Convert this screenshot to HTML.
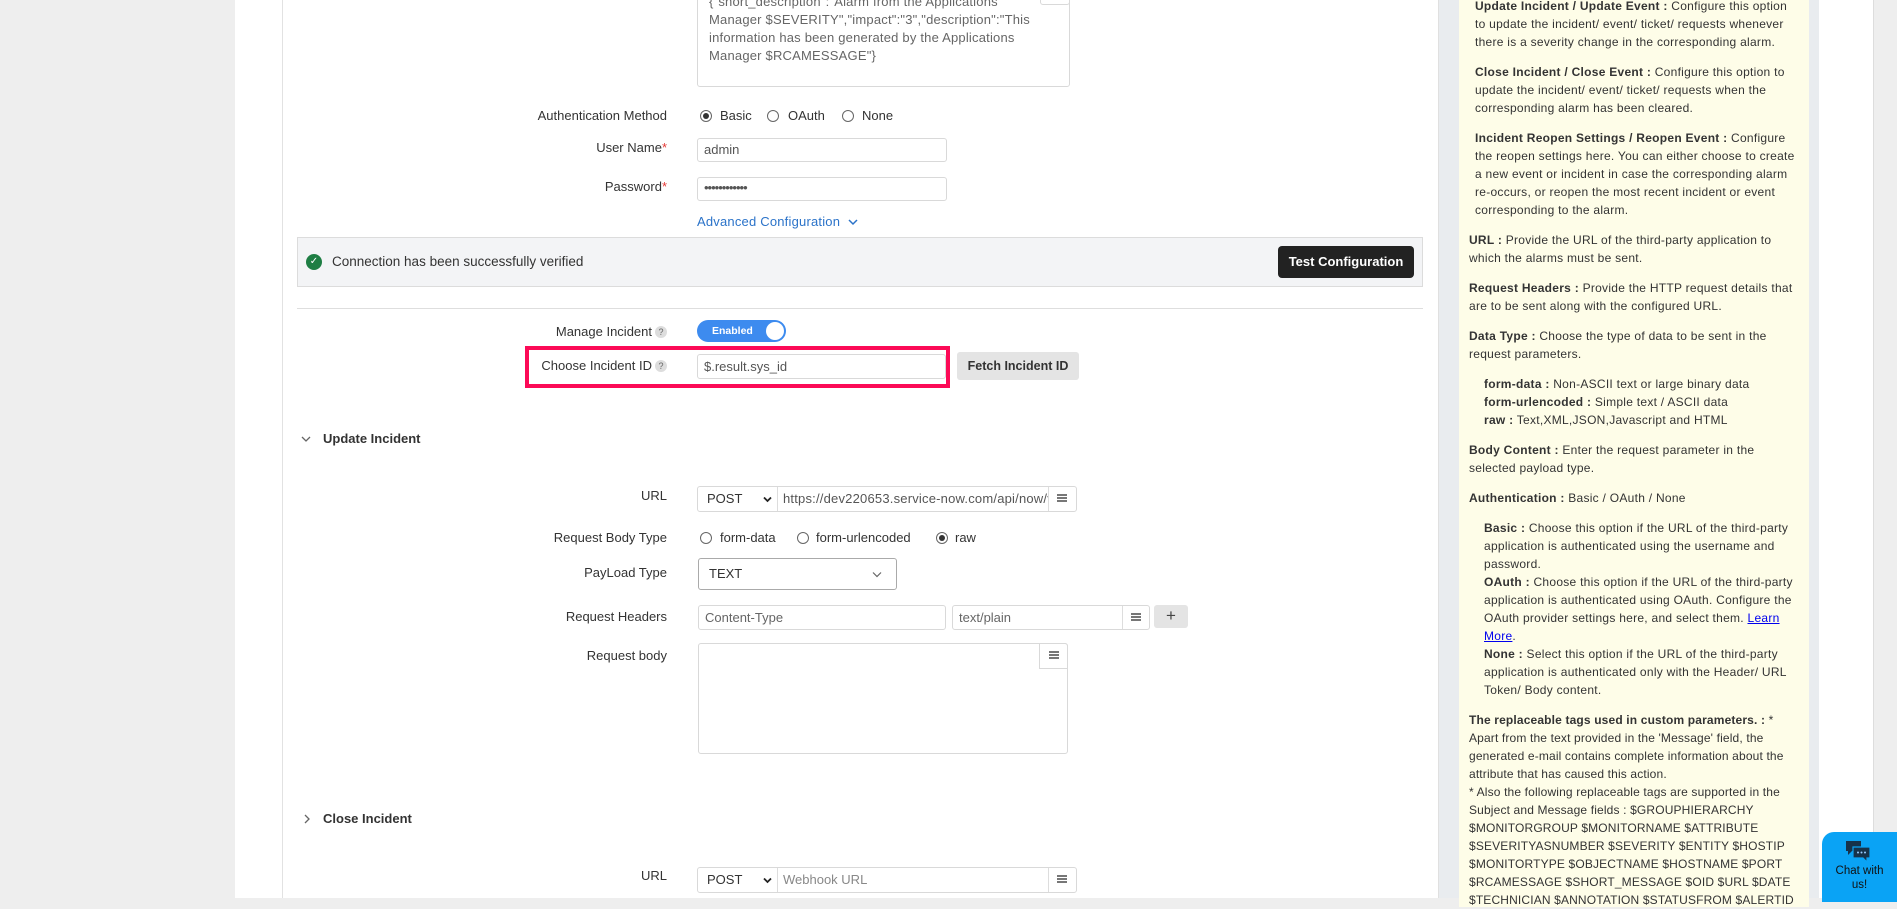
<!DOCTYPE html>
<html><head><meta charset="utf-8"><style>
*{box-sizing:border-box;margin:0;padding:0}
body{width:1897px;height:898px;overflow:hidden;background:#eeeeee;font-family:"Liberation Sans",sans-serif;font-size:13px;color:#333;position:relative}
.a{position:absolute}
.lbl{position:absolute;right:1230px;text-align:right;white-space:nowrap;color:#333;font-size:13px}
.inp{position:absolute;border:1px solid #d9d9d9;border-radius:3px;background:#fff;color:#555;padding-left:6px;font-size:13px;white-space:nowrap;overflow:hidden}
.rad{position:absolute;width:12px;height:12px;border:1px solid #666;border-radius:50%;background:#fff}
.rad.on::after{content:"";position:absolute;left:2px;top:2px;width:6px;height:6px;border-radius:50%;background:#333}
.t{position:absolute;white-space:nowrap;font-size:13px;color:#333}
.q{display:inline-block;width:12px;height:12px;border-radius:50%;background:#ddd;color:#666;font-size:9px;text-align:center;line-height:12px;vertical-align:1px;margin-left:3px}
.ico{position:absolute;width:10px;height:8px;border-top:2px solid #777;border-bottom:2px solid #777}
.ico::after{content:"";position:absolute;left:0;top:1px;width:10px;height:2px;background:#777}
.rp{position:absolute;left:1459px;top:-3px;width:350px;height:910px;background:#fefde8;padding:0 10px 0 10px;font-size:12px;letter-spacing:0.27px;line-height:18px;color:#333}
.rp p{margin-bottom:12px}
.rp b{color:#333}
.nw{white-space:nowrap}
</style></head><body>
<div class="a" style="left:235px;top:0;width:1203px;height:898px;background:#fff"></div>
<div class="a" style="left:282px;top:0;width:1px;height:898px;background:#e2e2e2"></div>
<div class="a" style="left:1438px;top:0;width:21px;height:898px;background:#e9ecef;border-left:1px solid #e0e0e0"></div>
<div class="a" style="left:1809px;top:0;width:10px;height:898px;background:#e9ecef"></div>
<div class="a" style="left:1819px;top:0;width:55px;height:898px;background:#fff;border-right:1px solid #ddd"></div>

<div class="a" style="left:697px;top:-10px;width:373px;height:97px;border:1px solid #d9d9d9;border-radius:3px"></div>
<div class="a" style="left:1040px;top:-5px;width:30px;height:10px;border:1px solid #d9d9d9;border-radius:3px"></div>
<div class="t" style="left:709px;top:-7px;color:#666;line-height:18px;letter-spacing:0.2px">{"short_description":"Alarm from the Applications<br>Manager $SEVERITY","impact":"3","description":"This<br>information has been generated by the Applications<br>Manager $RCAMESSAGE"}</div>

<div class="lbl" style="top:108px">Authentication Method</div>
<div class="rad on" style="left:700px;top:110px"></div><div class="t" style="left:720px;top:108px">Basic</div>
<div class="rad" style="left:767px;top:110px"></div><div class="t" style="left:788px;top:108px">OAuth</div>
<div class="rad" style="left:842px;top:110px"></div><div class="t" style="left:862px;top:108px">None</div>

<div class="lbl" style="top:140px">User Name<span style="color:#e53935">*</span></div>
<div class="inp" style="left:697px;top:138px;width:250px;height:24px;line-height:22px">admin</div>
<div class="lbl" style="top:179px">Password<span style="color:#e53935">*</span></div>
<div class="inp" style="left:697px;top:177px;width:250px;height:24px;line-height:20px;letter-spacing:-1px">••••••••••••</div>
<div class="t" style="left:697px;top:214px;color:#2b73c9;letter-spacing:0.2px">Advanced Configuration</div>
<svg class="a" style="left:848px;top:218px" width="10" height="8" viewBox="0 0 10 8"><path d="M1 2l4 4 4-4" fill="none" stroke="#2b73c9" stroke-width="1.5"/></svg>

<div class="a" style="left:297px;top:237px;width:1126px;height:50px;background:#f3f4f6;border:1px solid #dcdcdc"></div>
<div class="a" style="left:306px;top:254px;width:16px;height:16px;border-radius:50%;background:#1e7e44;color:#fff;font-size:10px;text-align:center;line-height:16px">&#10003;</div>
<div class="t" style="left:332px;top:254px;font-size:13.5px">Connection has been successfully verified</div>
<div class="a" style="left:1278px;top:246px;width:136px;height:32px;background:#222;border-radius:4px;color:#fff;font-weight:bold;font-size:13px;text-align:center;line-height:32px">Test Configuration</div>
<div class="a" style="left:297px;top:308px;width:1126px;height:1px;background:#dedede"></div>

<div class="lbl" style="top:324px">Manage Incident<span class="q">?</span></div>
<div class="a" style="left:697px;top:320px;width:89px;height:22px;background:#3d8bef;border-radius:11px;color:#fff;font-size:10.5px;font-weight:bold;line-height:22px;padding-left:15px">Enabled<div class="a" style="right:2px;top:2px;width:18px;height:18px;border-radius:50%;background:#fff"></div></div>

<div class="a" style="left:525px;top:346px;width:425px;height:42px;border:4px solid #fc0a57"></div>
<div class="lbl" style="top:358px">Choose Incident ID<span class="q">?</span></div>
<div class="inp" style="left:697px;top:354px;width:249px;height:25px;line-height:23px">$.result.sys_id</div>
<div class="a" style="left:957px;top:352px;width:122px;height:28px;background:#e4e4e4;border-radius:3px;font-weight:bold;font-size:12.5px;text-align:center;line-height:28px">Fetch Incident ID</div>

<svg class="a" style="left:301px;top:435px" width="10" height="8" viewBox="0 0 10 8"><path d="M1 2l4 4 4-4" fill="none" stroke="#666" stroke-width="1.3"/></svg>
<div class="t" style="left:323px;top:431px;font-weight:bold">Update Incident</div>

<div class="lbl" style="top:488px">URL</div>
<div class="inp" style="left:697px;top:486px;width:380px;height:26px;padding:0"></div>
<div class="t" style="left:707px;top:491px;color:#333">POST</div>
<svg class="a" style="left:763px;top:496px" width="9" height="7" viewBox="0 0 9 7"><path d="M1 1.5l3.5 3.5 3.5-3.5" fill="none" stroke="#222" stroke-width="1.8"/></svg>
<div class="a" style="left:777px;top:487px;width:1px;height:24px;background:#ddd"></div>
<div class="t" style="left:783px;top:491px;color:#555;width:265px;overflow:hidden;letter-spacing:0.2px">https://dev220653.service-now.com/api/now/v1</div>
<div class="a" style="left:1048px;top:487px;width:1px;height:24px;background:#ddd;"></div>
<div class="ico" style="left:1057px;top:494px"></div>

<div class="lbl" style="top:530px">Request Body Type</div>
<div class="rad" style="left:700px;top:532px"></div><div class="t" style="left:720px;top:530px">form-data</div>
<div class="rad" style="left:797px;top:532px"></div><div class="t" style="left:816px;top:530px">form-urlencoded</div>
<div class="rad on" style="left:936px;top:532px"></div><div class="t" style="left:955px;top:530px">raw</div>

<div class="lbl" style="top:565px">PayLoad Type</div>
<div class="inp" style="left:698px;top:558px;width:199px;height:32px;line-height:30px;border-color:#aaa;color:#333;padding-left:10px">TEXT</div>
<svg class="a" style="left:872px;top:571px" width="10" height="7" viewBox="0 0 10 7"><path d="M1 1.5l4 4 4-4" fill="none" stroke="#666" stroke-width="1.2"/></svg>

<div class="lbl" style="top:609px">Request Headers</div>
<div class="inp" style="left:698px;top:605px;width:248px;height:25px;line-height:23px;color:#666">Content-Type</div>
<div class="inp" style="left:952px;top:605px;width:198px;height:25px;line-height:23px;color:#666">text/plain</div>
<div class="a" style="left:1122px;top:606px;width:1px;height:23px;background:#ddd"></div>
<div class="ico" style="left:1131px;top:613px"></div>
<div class="a" style="left:1154px;top:605px;width:34px;height:23px;background:#e4e4e4;border-radius:3px;text-align:center;font-size:17px;line-height:22px;color:#444">+</div>

<div class="lbl" style="top:648px">Request body</div>
<div class="a" style="left:698px;top:643px;width:370px;height:111px;border:1px solid #d9d9d9;border-radius:3px"></div>
<div class="a" style="left:1039px;top:643px;width:29px;height:26px;border:1px solid #d9d9d9;border-radius:0 3px 0 0"></div>
<div class="ico" style="left:1049px;top:651px"></div>

<svg class="a" style="left:303px;top:814px" width="8" height="10" viewBox="0 0 8 10"><path d="M2 1l4 4-4 4" fill="none" stroke="#666" stroke-width="1.3"/></svg>
<div class="t" style="left:323px;top:811px;font-weight:bold">Close Incident</div>

<div class="lbl" style="top:868px">URL</div>
<div class="inp" style="left:697px;top:867px;width:380px;height:26px;padding:0"></div>
<div class="t" style="left:707px;top:872px">POST</div>
<svg class="a" style="left:763px;top:877px" width="9" height="7" viewBox="0 0 9 7"><path d="M1 1.5l3.5 3.5 3.5-3.5" fill="none" stroke="#222" stroke-width="1.8"/></svg>
<div class="a" style="left:777px;top:868px;width:1px;height:24px;background:#ddd"></div>
<div class="t" style="left:783px;top:872px;color:#888">Webhook URL</div>
<div class="a" style="left:1048px;top:868px;width:1px;height:24px;background:#ddd"></div>
<div class="ico" style="left:1057px;top:875px"></div>

<div class="rp">
<p style="padding-left:6px"><b>Update Incident / Update Event :</b> Configure this option to update the incident/ event/ ticket/ requests whenever there is a severity change in the corresponding alarm.</p>
<p style="padding-left:6px"><b>Close Incident / Close Event :</b> Configure this option to update the incident/ event/ ticket/ requests when the corresponding alarm has been cleared.</p>
<p style="padding-left:6px"><b>Incident Reopen Settings / Reopen Event :</b> Configure the reopen settings here. You can either choose to create a new event or incident in case the corresponding alarm re-occurs, or reopen the most recent incident or event corresponding to the alarm.</p>
<p><b>URL :</b> Provide the URL of the third-party application to which the alarms must be sent.</p>
<p><b>Request Headers :</b> Provide the HTTP request details that are to be sent along with the configured URL.</p>
<p><b>Data Type :</b> Choose the type of data to be sent in the request parameters.</p>
<p style="padding-left:15px"><b>form-data :</b> Non-ASCII text or large binary data<br><b>form-urlencoded :</b> Simple text / ASCII data<br><b>raw :</b> Text,XML,JSON,Javascript and HTML</p>
<p><b>Body Content :</b> Enter the request parameter in the selected payload type.</p>
<p><b>Authentication :</b> Basic / OAuth / None</p>
<p style="padding-left:15px"><b>Basic :</b> Choose this option if the URL of the third-party application is authenticated using the username and password.<br><b>OAuth :</b> Choose this option if the URL of the third-party application is authenticated using OAuth. Configure the OAuth provider settings here, and select them. <u style="color:#0000ee">Learn</u><br><u style="color:#0000ee">More</u>.<br><b>None :</b> Select this option if the URL of the third-party application is authenticated only with the Header/ URL Token/ Body content.</p>
<p style="letter-spacing:0.15px"><b>The replaceable tags used in custom parameters. :</b> *<br>Apart from the text provided in the 'Message' field, the generated e-mail contains complete information about the attribute that has caused this action.<br>* Also the following replaceable tags are supported in the Subject and Message fields : $GROUPHIERARCHY<br><span class="nw">$MONITORGROUP $MONITORNAME $ATTRIBUTE</span><br><span class="nw">$SEVERITYASNUMBER $SEVERITY $ENTITY $HOSTIP</span><br><span class="nw">$MONITORTYPE $OBJECTNAME $HOSTNAME $PORT</span><br><span class="nw">$RCAMESSAGE $SHORT_MESSAGE $OID $URL $DATE</span><br><span class="nw">$TECHNICIAN $ANNOTATION $STATUSFROM $ALERTID</span></p>
</div>

<div class="a" style="left:1822px;top:832px;width:75px;height:70px;background:#0aa3f5;border-radius:12px 0 0 0;text-align:center;color:#111;font-size:11.5px;line-height:14px;padding-top:32px">Chat with<br>us!</div>
<svg class="a" style="left:1845px;top:840px" width="26" height="22" viewBox="0 0 26 22"><path d="M1 1h15v10H7l-4 4v-4H1z" fill="#16324a"/><path d="M8 7h17v11h-3v4l-4-4H8z" fill="#16324a" stroke="#0aa3f5" stroke-width="1.2"/><circle cx="13" cy="12.5" r="1" fill="#9cf"/><circle cx="16.5" cy="12.5" r="1" fill="#9cf"/><circle cx="20" cy="12.5" r="1" fill="#9cf"/></svg>
</body></html>
